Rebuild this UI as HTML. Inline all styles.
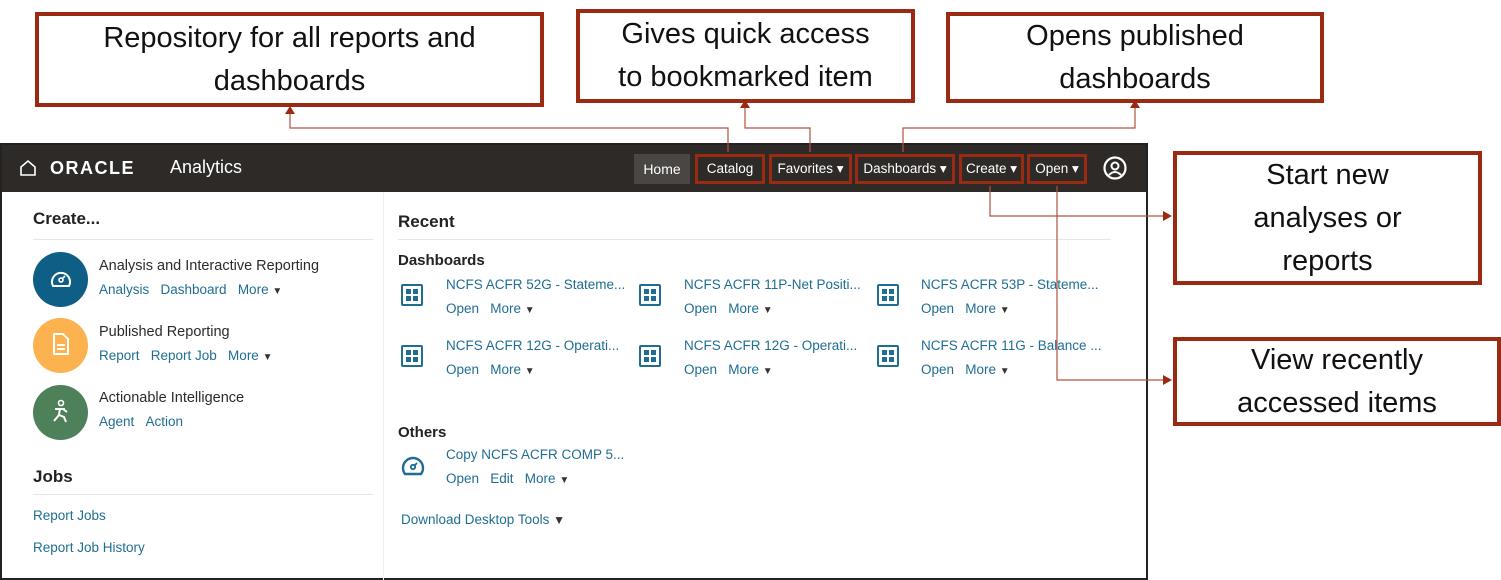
<!DOCTYPE html>
<html><head><meta charset="utf-8"><style>
*{margin:0;padding:0;box-sizing:border-box}
body{width:1501px;height:580px;background:#fff;position:relative;overflow:hidden;font-family:"Liberation Sans",sans-serif}
.a{position:absolute;white-space:nowrap}
.box{position:absolute;border:4px solid #9a2a12;background:#fff;text-align:center;color:#111;font-size:29px;line-height:43px;display:flex;align-items:center;justify-content:center}
.frame{position:absolute;left:0;top:143px;width:1148px;height:437px;border:2px solid #222;background:#fff}
.hdr{position:absolute;left:0;top:0;width:100%;height:47px;background:#2e2a27}
.nav{position:absolute;top:9px;height:30px;color:#fff;font-size:13.5px;line-height:24px;padding:0 4px;border:3px solid #9a2a12;white-space:nowrap;text-align:center}
.t{color:#2b2b2b;font-size:15px}
.l{color:#1f6d93;font-size:14px}
.h{color:#222;font-size:17px;font-weight:bold}
.tri{font-size:10px;color:#333}
.hr{position:absolute;height:1px;background:#e6e6e6}
.ic{position:absolute;width:22px;height:22px;border:2.5px solid #1f6d93;border-radius:2px}
.ic:before{content:"";position:absolute;left:3px;top:3px;width:5px;height:5px;background:#1f6d93;box-shadow:7px 0 #1f6d93,0 7px #1f6d93,7px 7px #1f6d93}
</style></head><body>

<div class="box" style="left:35px;top:12px;width:509px;height:95px">Repository for all reports and<br>dashboards</div>
<div class="box" style="left:576px;top:9px;width:339px;height:94px">Gives quick access<br>to bookmarked item</div>
<div class="box" style="left:946px;top:12px;width:378px;height:91px">Opens published<br>dashboards</div>
<div class="box" style="left:1173px;top:151px;width:309px;height:134px">Start new<br>analyses or<br>reports</div>
<div class="box" style="left:1173px;top:337px;width:328px;height:89px">View recently<br>accessed items</div>

<div class="frame">
<div class="hdr">
<svg class="a" style="left:17px;top:14px" width="18" height="18"><path d="M2 8L9 2L16 8V16H2Z" fill="none" stroke="#fff" stroke-width="1.6"/></svg>
<div class="a" style="left:48px;top:13px;color:#fff;font-size:18px;letter-spacing:1.5px;font-weight:bold">ORACLE</div>
<div class="a" style="left:168px;top:12px;color:#fff;font-size:18px">Analytics</div>
<div class="a" style="left:632px;top:9px;width:56px;height:30px;background:#4a4644;color:#fff;font-size:14px;line-height:30px;text-align:center">Home</div>
<div class="nav" style="left:693px;width:70px">Catalog</div>
<div class="nav" style="left:767px;width:83px">Favorites ▾</div>
<div class="nav" style="left:853px;width:100px">Dashboards ▾</div>
<div class="nav" style="left:957px;width:65px">Create ▾</div>
<div class="nav" style="left:1025px;width:60px">Open ▾</div>
<svg class="a" style="left:1101px;top:11px" width="24" height="24"><circle cx="12" cy="12" r="10.5" fill="none" stroke="#fff" stroke-width="2.2"/><circle cx="12" cy="10" r="3.5" fill="none" stroke="#fff" stroke-width="2"/><path d="M6 19Q12 13 18 19" fill="none" stroke="#fff" stroke-width="2"/></svg>
</div>

<div class="a" style="left:381px;top:47px;width:1px;height:388px;background:#eee"></div>

<div class="a h" style="left:31px;top:64px">Create...</div>
<div class="hr" style="left:31px;top:94px;width:340px"></div>

<div class="a" style="left:31px;top:107px;width:55px;height:55px;border-radius:50%;background:#0f5e85"></div>
<svg class="a" style="left:47px;top:123px" width="24" height="22"><path d="M4 18A9 9 0 1 1 20 18Z" fill="none" stroke="#fff" stroke-width="2"/><circle cx="12" cy="12" r="2" fill="none" stroke="#fff" stroke-width="1.6"/><path d="M13 11L16 8" stroke="#fff" stroke-width="1.6"/></svg>
<div class="a t" style="left:97px;top:113px;font-size:14.5px">Analysis and Interactive Reporting</div>
<div class="a l" style="left:97px;top:137px;font-size:13.5px">Analysis&nbsp;&nbsp;&nbsp;Dashboard&nbsp;&nbsp;&nbsp;More <span class="tri">▼</span></div>

<div class="a" style="left:31px;top:173px;width:55px;height:55px;border-radius:50%;background:#fbb24f"></div>
<svg class="a" style="left:49px;top:187px" width="20" height="24"><path d="M3 2H12L17 7V22H3Z" fill="none" stroke="#fff" stroke-width="2"/><path d="M6 13H14M6 17H14" stroke="#fff" stroke-width="2"/></svg>
<div class="a t" style="left:97px;top:179px;font-size:14.5px">Published Reporting</div>
<div class="a l" style="left:97px;top:203px;font-size:13.5px">Report&nbsp;&nbsp;&nbsp;Report Job&nbsp;&nbsp;&nbsp;More <span class="tri">▼</span></div>

<div class="a" style="left:31px;top:240px;width:55px;height:55px;border-radius:50%;background:#4e805a"></div>
<svg class="a" style="left:48px;top:254px" width="22" height="26"><circle cx="11" cy="4" r="2.5" fill="none" stroke="#fff" stroke-width="1.6"/><path d="M5 10H15M10 9L9 16L4 22M9 16L14 18L16 23M13 10L17 13" fill="none" stroke="#fff" stroke-width="2"/></svg>
<div class="a t" style="left:97px;top:245px;font-size:14.5px">Actionable Intelligence</div>
<div class="a l" style="left:97px;top:269px;font-size:13.5px">Agent&nbsp;&nbsp;&nbsp;Action</div>

<div class="a h" style="left:31px;top:322px">Jobs</div>
<div class="hr" style="left:31px;top:349px;width:340px"></div>
<div class="a l" style="left:31px;top:363px;font-size:13.5px">Report Jobs</div>
<div class="a l" style="left:31px;top:395px;font-size:13.5px">Report Job History</div>

<div class="a h" style="left:396px;top:67px">Recent</div>
<div class="hr" style="left:396px;top:94px;width:713px"></div>
<div class="a h" style="left:396px;top:107px;font-size:15px">Dashboards</div>

<div class="ic" style="left:399px;top:139px"></div>
<div class="a l" style="left:444px;top:132px;font-size:13.5px">NCFS ACFR 52G - Stateme...</div>
<div class="a l" style="left:444px;top:156px;font-size:13.5px">Open&nbsp;&nbsp;&nbsp;More <span class="tri">▼</span></div>
<div class="ic" style="left:637px;top:139px"></div>
<div class="a l" style="left:682px;top:132px;font-size:13.5px">NCFS ACFR 11P-Net Positi...</div>
<div class="a l" style="left:682px;top:156px;font-size:13.5px">Open&nbsp;&nbsp;&nbsp;More <span class="tri">▼</span></div>
<div class="ic" style="left:875px;top:139px"></div>
<div class="a l" style="left:919px;top:132px;font-size:13.5px">NCFS ACFR 53P - Stateme...</div>
<div class="a l" style="left:919px;top:156px;font-size:13.5px">Open&nbsp;&nbsp;&nbsp;More <span class="tri">▼</span></div>

<div class="ic" style="left:399px;top:200px"></div>
<div class="a l" style="left:444px;top:193px;font-size:13.5px">NCFS ACFR 12G - Operati...</div>
<div class="a l" style="left:444px;top:217px;font-size:13.5px">Open&nbsp;&nbsp;&nbsp;More <span class="tri">▼</span></div>
<div class="ic" style="left:637px;top:200px"></div>
<div class="a l" style="left:682px;top:193px;font-size:13.5px">NCFS ACFR 12G - Operati...</div>
<div class="a l" style="left:682px;top:217px;font-size:13.5px">Open&nbsp;&nbsp;&nbsp;More <span class="tri">▼</span></div>
<div class="ic" style="left:875px;top:200px"></div>
<div class="a l" style="left:919px;top:193px;font-size:13.5px">NCFS ACFR 11G - Balance ...</div>
<div class="a l" style="left:919px;top:217px;font-size:13.5px">Open&nbsp;&nbsp;&nbsp;More <span class="tri">▼</span></div>

<div class="a h" style="left:396px;top:279px;font-size:15px">Others</div>
<svg class="a" style="left:398px;top:309px" width="26" height="24"><path d="M5 20A10 10 0 1 1 21 20Z" fill="none" stroke="#1f6d93" stroke-width="2.4"/><circle cx="13" cy="13" r="2.2" fill="none" stroke="#1f6d93" stroke-width="1.8"/><path d="M14 12L17 9" stroke="#1f6d93" stroke-width="1.8"/></svg>
<div class="a l" style="left:444px;top:302px;font-size:13.5px">Copy NCFS ACFR COMP 5...</div>
<div class="a l" style="left:444px;top:326px;font-size:13.5px">Open&nbsp;&nbsp;&nbsp;Edit&nbsp;&nbsp;&nbsp;More <span class="tri">▼</span></div>
<div class="a l" style="left:399px;top:367px;font-size:13.5px">Download Desktop Tools <span class="tri" style="font-size:12px">▼</span></div>
</div>

<svg class="a" style="left:0;top:0;z-index:5" width="1501" height="580">
<g stroke="#b0533f" stroke-width="1.2" fill="none">
<path d="M728 152V128H290V112"/>
<path d="M810 152V128H745V106"/>
<path d="M903 152V128H1135V106"/>
<path d="M990 186V216H1165"/>
<path d="M1057 186V380H1165"/>
</g>
<g fill="#9a2a12">
<path d="M285 114L290 106L295 114Z"/>
<path d="M740 108L745 100L750 108Z"/>
<path d="M1130 108L1135 100L1140 108Z"/>
<path d="M1163 211L1172 216L1163 221Z"/>
<path d="M1163 375L1172 380L1163 385Z"/>
</g>
</svg>
</body></html>
